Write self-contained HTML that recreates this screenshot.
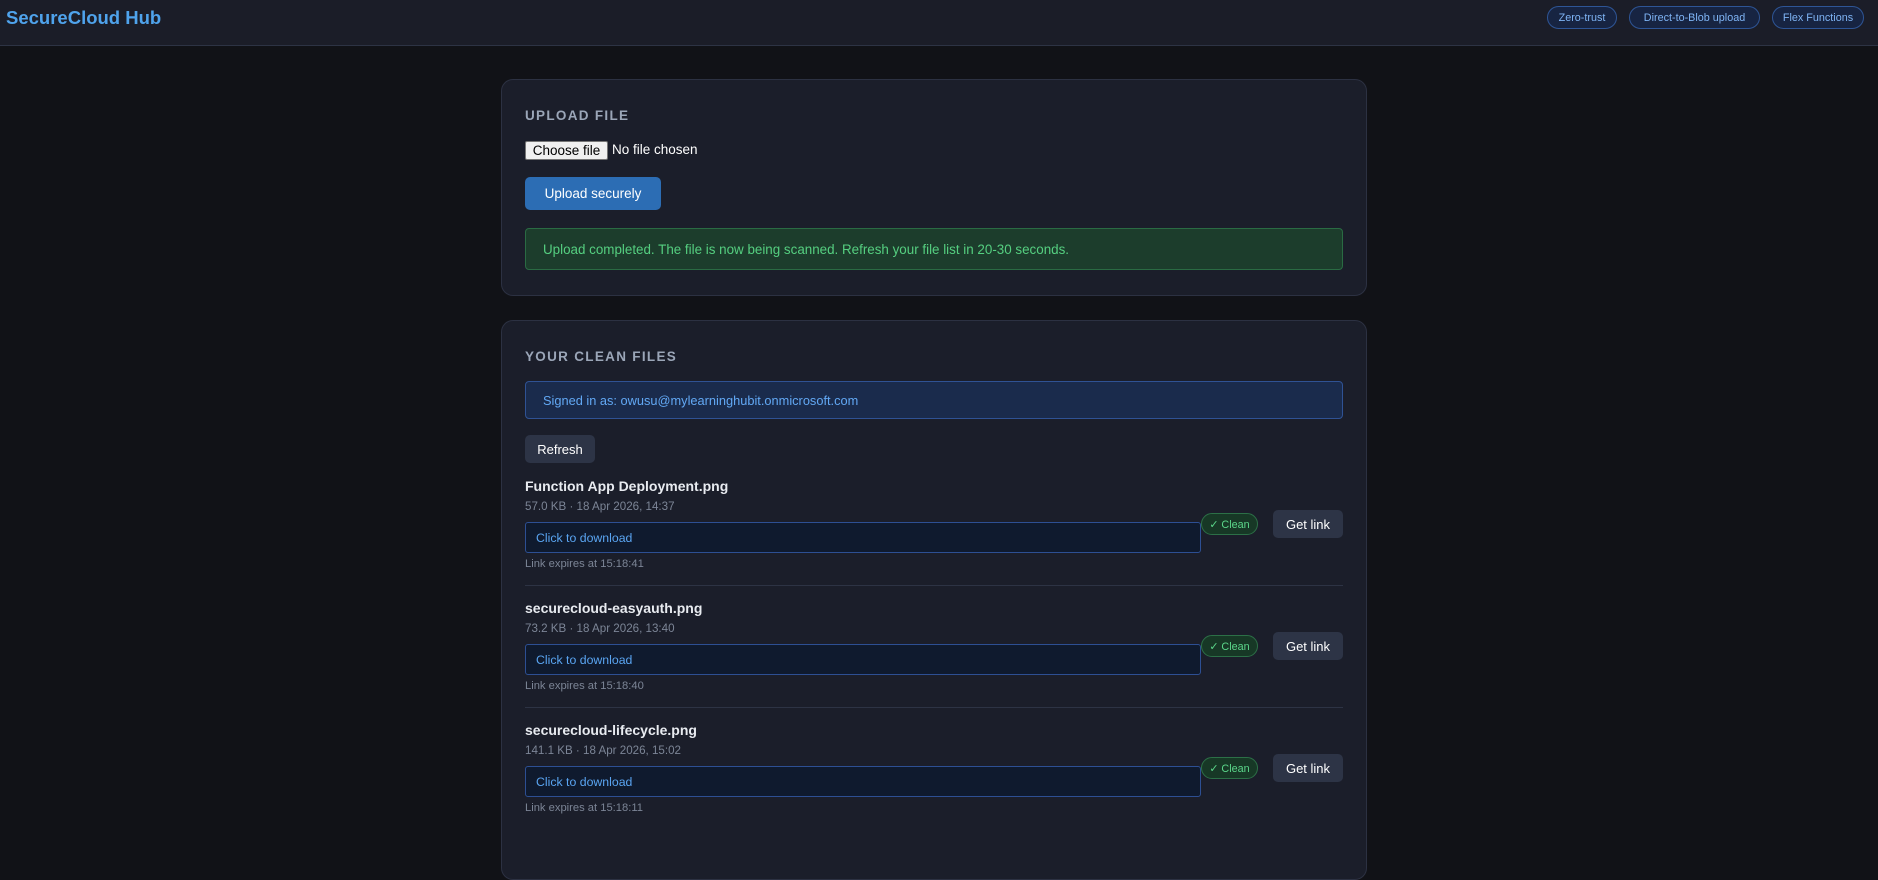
<!DOCTYPE html>
<html><head><meta charset="utf-8"><style>
*{box-sizing:border-box;margin:0;padding:0}
body{width:1878px;height:838px;overflow:hidden;background:#111217;font-family:"Liberation Sans",sans-serif;position:relative}
.a{position:absolute}
.hdr{left:0;top:0;width:1878px;height:46px;background:#1b1d28;border-bottom:1px solid #2d3344}
.title{left:6px;top:7px;font-size:18.5px;font-weight:bold;color:#4fa3ec}
.pill{top:6px;height:23px;border:1px solid #2e5596;background:#172442;color:#7fb4f5;font-size:10.8px;border-radius:12px;display:flex;align-items:center;justify-content:center;white-space:nowrap}
.card{left:501px;width:866px;background:#1b1e2a;border:1px solid #2c3142;border-radius:12px}
.h{left:525px;font-size:13.5px;font-weight:bold;letter-spacing:1.3px;color:#9ba6b8}
.btn{display:flex;align-items:center;justify-content:center;border-radius:5px;color:#fff;font-size:13.5px}
.name{left:525px;font-size:14px;font-weight:bold;color:#e8ebf0}
.meta{left:525px;font-size:11.6px;color:#7c8596}
.link{left:525px;width:676px;height:31px;background:#0f1a2e;border:1px solid #2d4f93;border-radius:3px;color:#5aa5f2;font-size:12.3px;padding-left:10px;display:flex;align-items:center}
.clean{left:1201px;width:57px;height:22px;background:#173826;border:1px solid #2c7047;border-radius:11px;color:#5bd68a;font-size:10.8px;display:flex;align-items:center;justify-content:center}
.get{left:1273px;width:70px;height:28px;background:#2d3446;font-size:13px}
.exp{left:525px;font-size:11.2px;color:#7c8596}
.div{left:525px;width:818px;height:1px;background:#2d3344}
</style></head><body>
<div class="a hdr"></div>
<div class="a title">SecureCloud Hub</div>
<div class="a pill" style="left:1547px;width:70px">Zero-trust</div>
<div class="a pill" style="left:1629px;width:131px">Direct-to-Blob upload</div>
<div class="a pill" style="left:1772px;width:92px">Flex Functions</div>

<div class="a card" style="top:79px;height:217px"></div>
<div class="a h" style="top:108px">UPLOAD FILE</div>
<div class="a" style="left:525px;top:141px;width:83px;height:19px;background:#f0f0f0;border:1px solid #767676;border-radius:2px;font-size:13.5px;color:#000;display:flex;align-items:center;justify-content:center">Choose file</div>
<div class="a" style="left:612px;top:142px;font-size:13.5px;color:#fff">No file chosen</div>
<div class="a btn" style="left:525px;top:177px;width:136px;height:33px;background:#2c6db4">Upload securely</div>
<div class="a" style="left:525px;top:228px;width:818px;height:42px;background:#1c3d2c;border:1px solid #2a6b43;border-radius:4px;color:#55cf80;font-size:13.4px;padding-left:17px;display:flex;align-items:center">Upload completed. The file is now being scanned. Refresh your file list in 20-30 seconds.</div>

<div class="a card" style="top:320px;height:560px"></div>
<div class="a h" style="top:349px">YOUR CLEAN FILES</div>
<div class="a" style="left:525px;top:381px;width:818px;height:38px;background:#1a2b4c;border:1px solid #2f5294;border-radius:4px;color:#62a8f4;font-size:12.8px;padding-left:17px;display:flex;align-items:center">Signed in as: owusu@mylearninghubit.onmicrosoft.com</div>
<div class="a btn" style="left:525px;top:435px;width:70px;height:28px;background:#2d3446;font-size:13px">Refresh</div>

<div class="a name" style="top:478px">Function App Deployment.png</div>
<div class="a meta" style="top:500px">57.0 KB · 18 Apr 2026, 14:37</div>
<div class="a link" style="top:522px">Click to download</div>
<div class="a clean" style="top:513px">✓ Clean</div>
<div class="a btn get" style="top:510px">Get link</div>
<div class="a exp" style="top:558px">Link expires at 15:18:41</div>
<div class="a div" style="top:585px"></div>

<div class="a name" style="top:600px">securecloud-easyauth.png</div>
<div class="a meta" style="top:622px">73.2 KB · 18 Apr 2026, 13:40</div>
<div class="a link" style="top:644px">Click to download</div>
<div class="a clean" style="top:635px">✓ Clean</div>
<div class="a btn get" style="top:632px">Get link</div>
<div class="a exp" style="top:680px">Link expires at 15:18:40</div>
<div class="a div" style="top:707px"></div>

<div class="a name" style="top:722px">securecloud-lifecycle.png</div>
<div class="a meta" style="top:744px">141.1 KB · 18 Apr 2026, 15:02</div>
<div class="a link" style="top:766px">Click to download</div>
<div class="a clean" style="top:757px">✓ Clean</div>
<div class="a btn get" style="top:754px">Get link</div>
<div class="a exp" style="top:802px">Link expires at 15:18:11</div>
</body></html>
